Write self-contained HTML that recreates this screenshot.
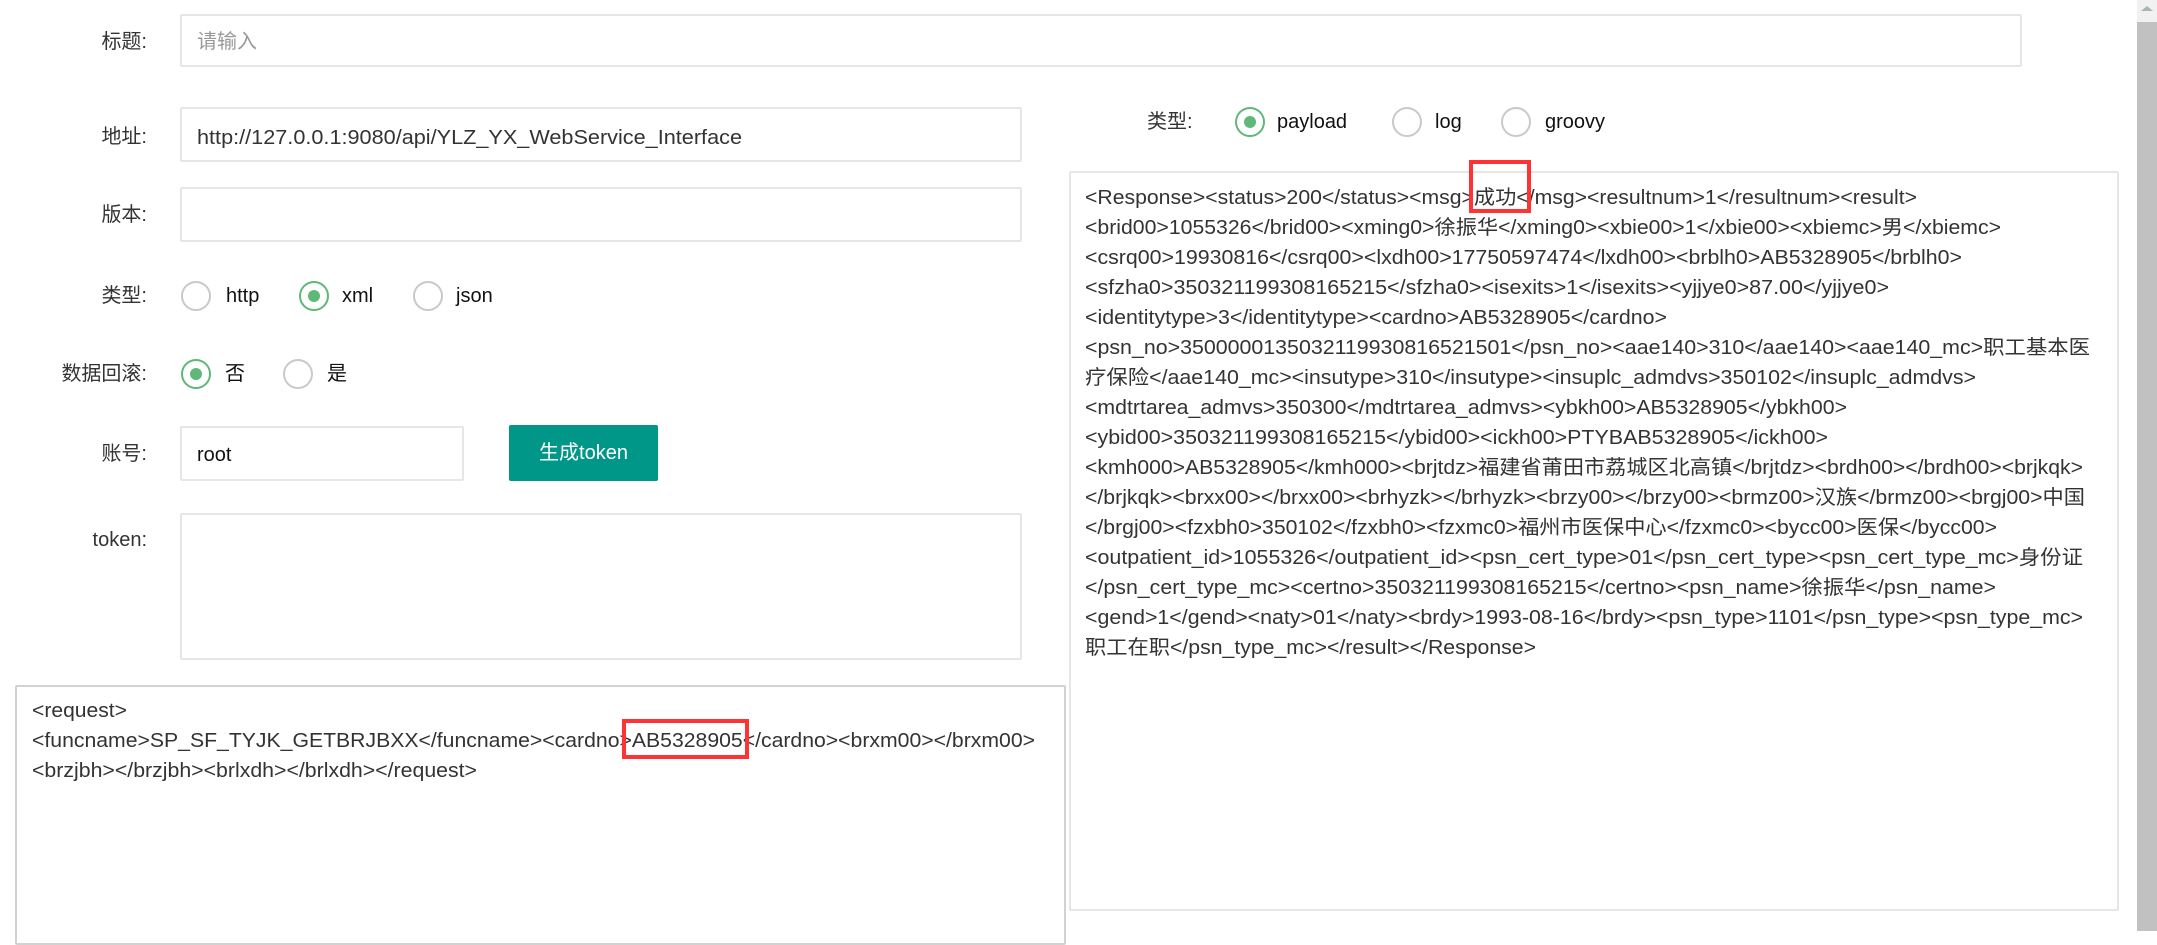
<!DOCTYPE html>
<html><head><meta charset="utf-8"><style>
*{margin:0;padding:0;box-sizing:border-box}
body{width:2157px;height:931px;overflow:hidden;background:#fff;font-family:"Liberation Sans","Noto Sans CJK SC",sans-serif;font-size:20px;color:#333;position:relative}
.a{position:absolute;white-space:nowrap;line-height:24px}
.lbl{position:absolute;white-space:nowrap;text-align:right;width:140px;left:7px;line-height:24px}
.box{position:absolute;border:2px solid #e6e6e6;background:#fff;border-radius:2px}
.r{position:absolute;width:30px;height:30px;border-radius:50%;border:2px solid #c9c9c9;background:#fff}
.r.on{border-color:#5fb878}
.r.on:after{content:"";position:absolute;left:7px;top:7px;width:12px;height:12px;border-radius:50%;background:#5fb878}
.red{position:absolute;border:4px solid #f33}
svg{position:absolute;left:0;top:0}
svg text{font-family:"Liberation Sans","Noto Sans CJK SC",sans-serif;font-size:20px;fill:#333}
</style></head><body>
<div class="lbl" style="top:30px">标题:</div>
<div class="box" style="left:180px;top:14px;width:1842px;height:53px"></div>
<div class="a" style="left:197px;top:30px;color:#999">请输入</div>

<div class="lbl" style="top:125px">地址:</div>
<div class="box" style="left:180px;top:107px;width:842px;height:55px"></div>

<div class="lbl" style="top:203px">版本:</div>
<div class="box" style="left:180px;top:187px;width:842px;height:55px"></div>

<div class="lbl" style="top:284px">类型:</div>
<div class="r" style="left:181px;top:281px"></div><div class="a" style="left:226px;top:284px;color:#111">http</div>
<div class="r on" style="left:299px;top:281px"></div><div class="a" style="left:342px;top:284px;color:#111">xml</div>
<div class="r" style="left:413px;top:281px"></div><div class="a" style="left:456px;top:284px;color:#111">json</div>

<div class="lbl" style="top:362px">数据回滚:</div>
<div class="r on" style="left:181px;top:359px"></div><div class="a" style="left:225px;top:362px;color:#111">否</div>
<div class="r" style="left:283px;top:359px"></div><div class="a" style="left:327px;top:362px;color:#111">是</div>

<div class="lbl" style="top:442px">账号:</div>
<div class="box" style="left:180px;top:426px;width:284px;height:55px"></div>
<div class="a" style="left:197px;top:443px;color:#111">root</div>
<div class="a" style="left:509px;top:425px;width:149px;height:56px;background:#009688;color:#fff;text-align:center;line-height:56px;border-radius:2px">生成token</div>

<div class="lbl" style="top:528px">token:</div>
<div class="box" style="left:180px;top:513px;width:842px;height:147px"></div>

<div class="box" style="left:15px;top:685px;width:1051px;height:260px;border-color:#d2d2d2"></div>

<div class="a" style="left:1147px;top:110px">类型:</div>
<div class="r on" style="left:1235px;top:107px"></div><div class="a" style="left:1277px;top:110px;color:#111">payload</div>
<div class="r" style="left:1392px;top:107px"></div><div class="a" style="left:1435px;top:110px;color:#111">log</div>
<div class="r" style="left:1501px;top:107px"></div><div class="a" style="left:1545px;top:110px;color:#111">groovy</div>

<div class="box" style="left:1069px;top:171px;width:1050px;height:740px"></div>

<svg width="2157" height="931" xmlns="http://www.w3.org/2000/svg">
<text x="197" y="144" textLength="545" lengthAdjust="spacingAndGlyphs">http://127.0.0.1:9080/api/YLZ_YX_WebService_Interface</text>
<g>
<text x="32" y="717" textLength="95" lengthAdjust="spacingAndGlyphs">&lt;request&gt;</text>
<text x="32" y="747" textLength="1003" lengthAdjust="spacingAndGlyphs">&lt;funcname&gt;SP_SF_TYJK_GETBRJBXX&lt;/funcname&gt;&lt;cardno&gt;AB5328905&lt;/cardno&gt;&lt;brxm00&gt;&lt;/brxm00&gt;</text>
<text x="32" y="777" textLength="445" lengthAdjust="spacingAndGlyphs">&lt;brzjbh&gt;&lt;/brzjbh&gt;&lt;brlxdh&gt;&lt;/brlxdh&gt;&lt;/request&gt;</text>
</g>
<g>
<text x="1085" y="204" textLength="832" lengthAdjust="spacingAndGlyphs">&lt;Response&gt;&lt;status&gt;200&lt;/status&gt;&lt;msg&gt;成功&lt;/msg&gt;&lt;resultnum&gt;1&lt;/resultnum&gt;&lt;result&gt;</text>
<text x="1085" y="234" textLength="916" lengthAdjust="spacingAndGlyphs">&lt;brid00&gt;1055326&lt;/brid00&gt;&lt;xming0&gt;徐振华&lt;/xming0&gt;&lt;xbie00&gt;1&lt;/xbie00&gt;&lt;xbiemc&gt;男&lt;/xbiemc&gt;</text>
<text x="1085" y="264" textLength="877" lengthAdjust="spacingAndGlyphs">&lt;csrq00&gt;19930816&lt;/csrq00&gt;&lt;lxdh00&gt;17750597474&lt;/lxdh00&gt;&lt;brblh0&gt;AB5328905&lt;/brblh0&gt;</text>
<text x="1085" y="294" textLength="804" lengthAdjust="spacingAndGlyphs">&lt;sfzha0&gt;350321199308165215&lt;/sfzha0&gt;&lt;isexits&gt;1&lt;/isexits&gt;&lt;yjjye0&gt;87.00&lt;/yjjye0&gt;</text>
<text x="1085" y="324" textLength="582" lengthAdjust="spacingAndGlyphs">&lt;identitytype&gt;3&lt;/identitytype&gt;&lt;cardno&gt;AB5328905&lt;/cardno&gt;</text>
<text x="1085" y="354" textLength="1005" lengthAdjust="spacingAndGlyphs">&lt;psn_no&gt;3500000135032119930816521501&lt;/psn_no&gt;&lt;aae140&gt;310&lt;/aae140&gt;&lt;aae140_mc&gt;职工基本医</text>
<text x="1085" y="384" textLength="891" lengthAdjust="spacingAndGlyphs">疗保险&lt;/aae140_mc&gt;&lt;insutype&gt;310&lt;/insutype&gt;&lt;insuplc_admdvs&gt;350102&lt;/insuplc_admdvs&gt;</text>
<text x="1085" y="414" textLength="762" lengthAdjust="spacingAndGlyphs">&lt;mdtrtarea_admvs&gt;350300&lt;/mdtrtarea_admvs&gt;&lt;ybkh00&gt;AB5328905&lt;/ybkh00&gt;</text>
<text x="1085" y="444" textLength="743" lengthAdjust="spacingAndGlyphs">&lt;ybid00&gt;350321199308165215&lt;/ybid00&gt;&lt;ickh00&gt;PTYBAB5328905&lt;/ickh00&gt;</text>
<text x="1085" y="474" textLength="998" lengthAdjust="spacingAndGlyphs">&lt;kmh000&gt;AB5328905&lt;/kmh000&gt;&lt;brjtdz&gt;福建省莆田市荔城区北高镇&lt;/brjtdz&gt;&lt;brdh00&gt;&lt;/brdh00&gt;&lt;brjkqk&gt;</text>
<text x="1085" y="504" textLength="1000" lengthAdjust="spacingAndGlyphs">&lt;/brjkqk&gt;&lt;brxx00&gt;&lt;/brxx00&gt;&lt;brhyzk&gt;&lt;/brhyzk&gt;&lt;brzy00&gt;&lt;/brzy00&gt;&lt;brmz00&gt;汉族&lt;/brmz00&gt;&lt;brgj00&gt;中国</text>
<text x="1085" y="534" textLength="912" lengthAdjust="spacingAndGlyphs">&lt;/brgj00&gt;&lt;fzxbh0&gt;350102&lt;/fzxbh0&gt;&lt;fzxmc0&gt;福州市医保中心&lt;/fzxmc0&gt;&lt;bycc00&gt;医保&lt;/bycc00&gt;</text>
<text x="1085" y="564" textLength="998" lengthAdjust="spacingAndGlyphs">&lt;outpatient_id&gt;1055326&lt;/outpatient_id&gt;&lt;psn_cert_type&gt;01&lt;/psn_cert_type&gt;&lt;psn_cert_type_mc&gt;身份证</text>
<text x="1085" y="594" textLength="911" lengthAdjust="spacingAndGlyphs">&lt;/psn_cert_type_mc&gt;&lt;certno&gt;350321199308165215&lt;/certno&gt;&lt;psn_name&gt;徐振华&lt;/psn_name&gt;</text>
<text x="1085" y="624" textLength="998" lengthAdjust="spacingAndGlyphs">&lt;gend&gt;1&lt;/gend&gt;&lt;naty&gt;01&lt;/naty&gt;&lt;brdy&gt;1993-08-16&lt;/brdy&gt;&lt;psn_type&gt;1101&lt;/psn_type&gt;&lt;psn_type_mc&gt;</text>
<text x="1085" y="654" textLength="451" lengthAdjust="spacingAndGlyphs">职工在职&lt;/psn_type_mc&gt;&lt;/result&gt;&lt;/Response&gt;</text>
</g>
</svg>
<div class="red" style="left:622px;top:719px;width:127px;height:40px"></div>
<div class="red" style="left:1469px;top:160px;width:62px;height:53px"></div>

<div class="a" style="left:2137px;top:0;width:20px;height:931px;background:#f1f1f1"></div>
<div class="a" style="left:2137px;top:22px;width:20px;height:909px;background:#c1c1c1"></div>
<div class="a" style="left:2141px;top:6px;width:0;height:0;border-left:6px solid transparent;border-right:6px solid transparent;border-bottom:5px solid #a3b8ad"></div>
</body></html>
